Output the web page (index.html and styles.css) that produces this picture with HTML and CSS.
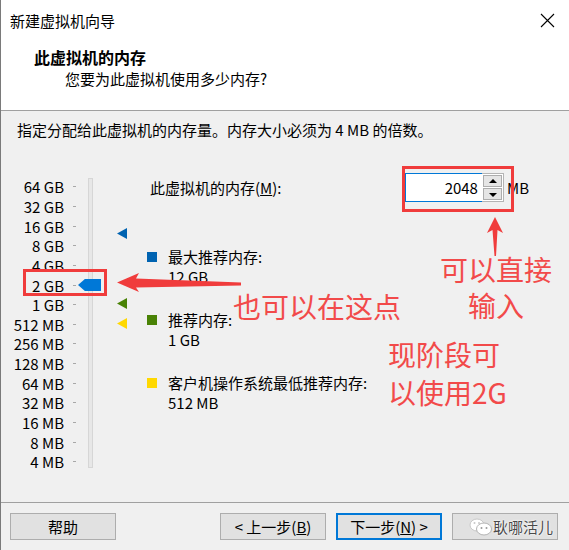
FILE: index.html
```html
<!DOCTYPE html>
<html lang="zh-CN">
<head>
    <meta charset="UTF-8">
    <meta name="viewport" content="width=device-width, initial-scale=1.0">
    <title>新建虚拟机向导</title>
    <link rel="stylesheet" href="styles.css">
</head>
<body>
    <div class="window">
        <div class="titlebar">
            <span class="title">新建虚拟机向导</span>
            <svg class="close" width="15" height="15" viewBox="0 0 15 15">
                <path d="M1 1L14 14M14 1L1 14" stroke="#000" stroke-width="1.1" fill="none"/>
            </svg>
        </div>

        <div class="header">
            <h1>此虚拟机的内存</h1>
            <p>您要为此虚拟机使用多少内存?</p>
        </div>

        <div class="content">
            <p class="desc">指定分配给此虚拟机的内存量。内存大小必须为 4 MB 的倍数。</p>

            <div class="main">
                <div class="scale">
                    <ul class="labels">
                        <li><span>64 GB</span><i></i></li>
                        <li><span>32 GB</span><i></i></li>
                        <li><span>16 GB</span><i></i></li>
                        <li><span>8 GB</span><i></i></li>
                        <li><span>4 GB</span><i></i></li>
                        <li><span>2 GB</span><i></i></li>
                        <li><span>1 GB</span><i></i></li>
                        <li><span>512 MB</span><i></i></li>
                        <li><span>256 MB</span><i></i></li>
                        <li><span>128 MB</span><i></i></li>
                        <li><span>64 MB</span><i></i></li>
                        <li><span>32 MB</span><i></i></li>
                        <li><span>16 MB</span><i></i></li>
                        <li><span>8 MB</span><i></i></li>
                        <li><span>4 MB</span><i></i></li>
                    </ul>
                    <div class="track"></div>
                    <div class="thumb"></div>
                    <div class="marker max"></div>
                    <div class="marker rec"></div>
                    <div class="marker min"></div>
                </div>

                <div class="panel">
                    <div class="mem-row">
                        <label for="mem">此虚拟机的内存(<u>M</u>):</label>
                        <div class="spin-group">
                            <div class="spin">
                                <input id="mem" type="text" value="2048">
                                <div class="spin-btns">
                                    <span class="spin-btn up"></span>
                                    <span class="spin-btn down"></span>
                                </div>
                            </div>
                            <span class="unit">MB</span>
                        </div>
                    </div>

                    <ul class="legend">
                        <li><span class="sq blue"></span><div>最大推荐内存:<br>12 GB</div></li>
                        <li><span class="sq green"></span><div>推荐内存:<br>1 GB</div></li>
                        <li><span class="sq yellow"></span><div>客户机操作系统最低推荐内存:<br>512 MB</div></li>
                    </ul>
                </div>
            </div>
        </div>

        <div class="footer">
            <button class="btn">帮助</button>
            <div class="btn-group">
                <button class="btn">&lt; 上一步(<u>B</u>)</button>
                <button class="btn primary">下一步(<u>N</u>) &gt;</button>
                <button class="btn watermark">
                    <svg width="24" height="18" viewBox="0 0 24 18">
                        <ellipse cx="8" cy="7" rx="7" ry="6" fill="#fff" stroke="#c8c8c8"/>
                        <ellipse cx="15" cy="11" rx="7.5" ry="6" fill="#fff" stroke="#b4b4b4"/>
                        <circle cx="5.5" cy="5" r="1" fill="#c8c8c8"/>
                        <circle cx="10" cy="5" r="1" fill="#c8c8c8"/>
                        <circle cx="12.5" cy="10" r="1" fill="#999"/>
                        <circle cx="17.5" cy="10" r="1" fill="#999"/>
                    </svg>
                    <span>耿哪活儿</span>
                </button>
            </div>
        </div>
    </div>

    <!-- red annotations drawn over the dialog -->
    <div class="annot">
        <div class="mark-box box-slider"></div>
        <div class="mark-box box-spin"></div>
        <svg class="arrows" width="569" height="550" viewBox="0 0 569 550">
            <polygon points="117,282.5 139,273 136,278.5 241,282.5 241,285.5 136,287.5 139,292"/>
            <polygon points="495,217 503,233 497.5,230 496,256 494.5,256 492.5,230 487,233"/>
        </svg>
        <div class="note note-input"><span>可以直接</span><span>输入</span></div>
        <div class="note note-click"><span>也可以在这点</span></div>
        <div class="note note-now"><span>现阶段可</span><span>以使用2G</span></div>
    </div>
</body>
</html>
```

FILE: styles.css
```css
* {
    box-sizing: border-box;
}

body {
    margin: 0;
    position: relative;
    width: 569px;
    height: 550px;
    overflow: hidden;
    font-family: "Noto Sans CJK SC", sans-serif;
    font-size: 15px;
    color: #000;
    background-color: #f0f0f0;
}

.window {
    height: 550px;
    border-left: 1px solid #7a7a7a;
    display: flex;
    flex-direction: column;
}

.titlebar {
    height: 40px;
    flex-shrink: 0;
    background-color: #fff;
    display: flex;
    align-items: center;
    justify-content: space-between;
    padding: 0 14px 0 9px;
}

.header {
    height: 71px;
    flex-shrink: 0;
    background-color: #fff;
    border-bottom: 1px solid #a0a0a0;
    padding: 6px 0 0 33px;
}

.header h1 {
    margin: 0;
    font-size: 16px;
    font-weight: 700;
    line-height: 22px;
}

.header p {
    margin: 0 0 0 31px;
    line-height: 22px;
}

.content {
    flex: 1;
    padding: 8px 0 0 16px;
}

.desc {
    margin: 0 0 36px 0;
    line-height: 22px;
}

.main {
    display: flex;
    align-items: flex-start;
}

/* slider */
.scale {
    position: relative;
    width: 110px;
    flex-shrink: 0;
    display: flex;
    align-items: flex-start;
}

.labels {
    margin: 0;
    padding: 0;
    list-style: none;
    display: grid;
    grid-auto-rows: 19.65px;
}

.labels li {
    display: flex;
    align-items: center;
}

.labels span {
    width: 47px;
    display: flex;
    justify-content: flex-end;
    white-space: nowrap;
    line-height: 1;
}

.labels i {
    width: 3px;
    height: 1px;
    margin-left: 9px;
    background-color: #a8a8a8;
}

.track {
    width: 5px;
    height: 290px;
    margin: 1px 0 0 12px;
    background-color: #e7e7e7;
    border: 1px solid #d6d6d6;
}

.thumb {
    position: absolute;
    left: 61px;
    top: 102px;
    width: 23px;
    height: 12px;
    background-color: #0078d7;
    clip-path: polygon(0 50%, 30% 0, 100% 0, 100% 100%, 30% 100%);
}

.marker {
    position: absolute;
    left: 100px;
    width: 10px;
    height: 11px;
    clip-path: polygon(0 50%, 100% 0, 100% 100%);
}

.marker.max {
    top: 51px;
    background-color: #0063b1;
}

.marker.rec {
    top: 121px;
    background-color: #498205;
}

.marker.min {
    top: 141px;
    background-color: #ffd800;
}

/* right side */
.panel {
    width: 382px;
    margin-left: 20px;
}

.mem-row {
    height: 20px;
    padding-left: 3px;
    display: flex;
    align-items: center;
}

.spin-group {
    margin-left: auto;
    display: flex;
    align-items: center;
}

.spin {
    display: flex;
    height: 29px;
}

.spin input {
    width: 77px;
    height: 29px;
    border: 1px solid #0078d7;
    border-right: none;
    padding: 0 4px 0 0;
    text-align: right;
    font-family: inherit;
    font-size: 15px;
    color: #000;
    background-color: #fff;
    outline: none;
}

.spin-btns {
    width: 22px;
    display: flex;
    flex-direction: column;
    gap: 1px;
    padding: 1px;
    border: 1px solid #b4b4b4;
    border-left: none;
    background-color: #fff;
}

.spin-btn {
    flex: 1;
    position: relative;
    background-color: #e5e5e5;
    border: 1px solid #adadad;
}

.spin-btn::after {
    content: "";
    position: absolute;
    left: 5px;
    top: 3px;
    border-left: 4px solid transparent;
    border-right: 4px solid transparent;
}

.spin-btn.up::after {
    border-bottom: 4px solid #000;
}

.spin-btn.down::after {
    top: 4px;
    border-top: 4px solid #000;
}

.unit {
    margin-left: 3px;
}

.legend {
    margin: 50px 0 0 0;
    padding: 0;
    list-style: none;
    display: flex;
    flex-direction: column;
    gap: 23px;
}

.legend li {
    display: flex;
    align-items: flex-start;
    line-height: 20px;
}

.sq {
    width: 10px;
    height: 10px;
    margin: 5px 11px 0 0;
    flex-shrink: 0;
}

.sq.blue {
    background-color: #0063b1;
}

.sq.green {
    background-color: #498205;
}

.sq.yellow {
    background-color: #ffd800;
}

/* bottom buttons */
.footer {
    height: 48px;
    flex-shrink: 0;
    border-top: 1px solid #a0a0a0;
    padding: 10px 11px 0 9px;
    display: flex;
    align-items: flex-start;
}

.btn-group {
    margin-left: auto;
    display: flex;
    gap: 10px;
}

.btn {
    width: 106px;
    height: 27px;
    padding: 0;
    font-family: inherit;
    font-size: 15px;
    color: #000;
    background-color: #e1e1e1;
    border: 1px solid #adadad;
    display: flex;
    align-items: center;
    justify-content: center;
}

.btn.primary {
    border: 2px solid #0078d7;
}

.btn.watermark {
    justify-content: flex-end;
    padding-right: 4px;
    gap: 0;
}

.btn.watermark span {
    color: #4a4a4a;
    text-shadow: 0 0 2px #fff, 0 0 2px #fff;
}

/* annotations */
.annot {
    position: absolute;
    left: 0;
    top: 0;
    width: 569px;
    height: 550px;
    pointer-events: none;
}

.mark-box {
    position: absolute;
    border: 3px solid #f03c3c;
}

.box-slider {
    left: 23px;
    top: 269px;
    width: 84px;
    height: 27px;
}

.box-spin {
    left: 402px;
    top: 166px;
    width: 112px;
    height: 46px;
}

.arrows {
    position: absolute;
    left: 0;
    top: 0;
}

.arrows polygon {
    fill: #f03c3c;
}

.note {
    position: absolute;
    font-size: 28px;
    line-height: 28px;
    color: #f24a4a;
    white-space: nowrap;
    display: flex;
    flex-direction: column;
}

.note span {
    height: 28px;
}

.note-input {
    left: 438px;
    top: 255px;
    width: 116px;
    align-items: center;
    gap: 8px;
}

.note-click {
    left: 233px;
    top: 292px;
}

.note-now {
    left: 388px;
    top: 340px;
    gap: 10px;
}
```
